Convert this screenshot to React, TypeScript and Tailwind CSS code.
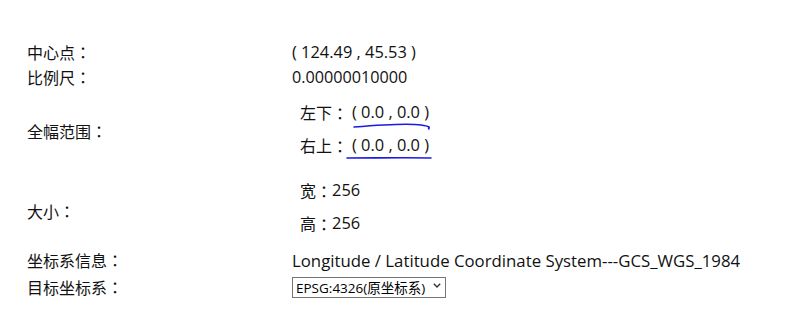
const font = { fontFamily: '"Open Sans", "Noto Sans CJK SC", sans-serif' };

// centred full-width colon, as in the reference
function Colon() {
  return <span style={{ fontFamily: '"Noto Sans CJK TC", sans-serif' }}>：</span>;
}

function Scribble({ d, className }: { d: string; className: string }) {
  return (
    <svg className={`pointer-events-none absolute ${className}`} width="100" height="10" viewBox="0 0 100 10" fill="none">
      <path d={d} stroke="#1a1ae6" strokeWidth="1.6" strokeLinecap="round" />
    </svg>
  );
}

export default function App() {
  return (
    <div className="h-[332px] w-[806px] bg-white pl-[27px] pt-[40px] text-[16px] text-[#111]" style={font}>
      <div className="flex h-[25px] items-center">
        <div className="w-[265px]">中心点<Colon /></div>
        <div className="text-[16.4px]">( 124.49 , 45.53 )</div>
      </div>
      <div className="flex h-[25px] items-center">
        <div className="w-[265px]">比例尺<Colon /></div>
        <div className="text-[16.2px]">0.00000010000</div>
      </div>

      <div className="mt-[6px] flex items-center">
        <div className="w-[265px] pt-[4px]">全幅范围<Colon /></div>
        <div className="flex flex-col pl-[8px]">
          <div className="relative flex h-[33px] items-center">
            左下<Colon /><span className="ml-[4px] text-[16.4px]">( 0.0 , 0.0 )</span>
            <Scribble className="left-[53px] top-[27px]" d="M1 4 C 25 2, 55 0, 68 2 S 74 5, 76 6" />
          </div>
          <div className="relative flex h-[33px] items-center">
            右上<Colon /><span className="ml-[4px] text-[16.4px]">( 0.0 , 0.0 )</span>
            <Scribble className="left-[46px] top-[24px]" d="M1 5 C 30 5, 60 4.5, 85 5" />
          </div>
        </div>
      </div>

      <div className="mt-[12px] flex items-center">
        <div className="w-[265px] pt-[8px]">大小<Colon /></div>
        <div className="flex flex-col pl-[8px]">
          <div className="flex h-[33px] items-center">宽<Colon /><span className="text-[16.4px]">256</span></div>
          <div className="flex h-[33px] items-center">高<Colon /><span className="text-[16.4px]">256</span></div>
        </div>
      </div>

      <div className="mt-[8px] flex h-[25px] items-center">
        <div className="w-[265px]">坐标系信息<Colon /></div>
        <div className="text-[16.8px]">Longitude / Latitude Coordinate System---GCS_WGS_1984</div>
      </div>
      <div className="flex h-[28px] items-center">
        <div className="w-[265px]">目标坐标系<Colon /></div>
        <div className="relative">
          <select className="h-[21px] w-[154px] appearance-none border border-[#767676] bg-white pl-[3px] text-[13.5px] text-black outline-none">
            <option>EPSG:4326(原坐标系)</option>
          </select>
          <svg className="pointer-events-none absolute right-[5px] top-[8px]" width="8" height="5" viewBox="0 0 8 5" fill="none">
            <path d="M0.8 0.8 L4 4 L7.2 0.8" stroke="#333" strokeWidth="1.4" />
          </svg>
        </div>
      </div>
    </div>
  );
}
